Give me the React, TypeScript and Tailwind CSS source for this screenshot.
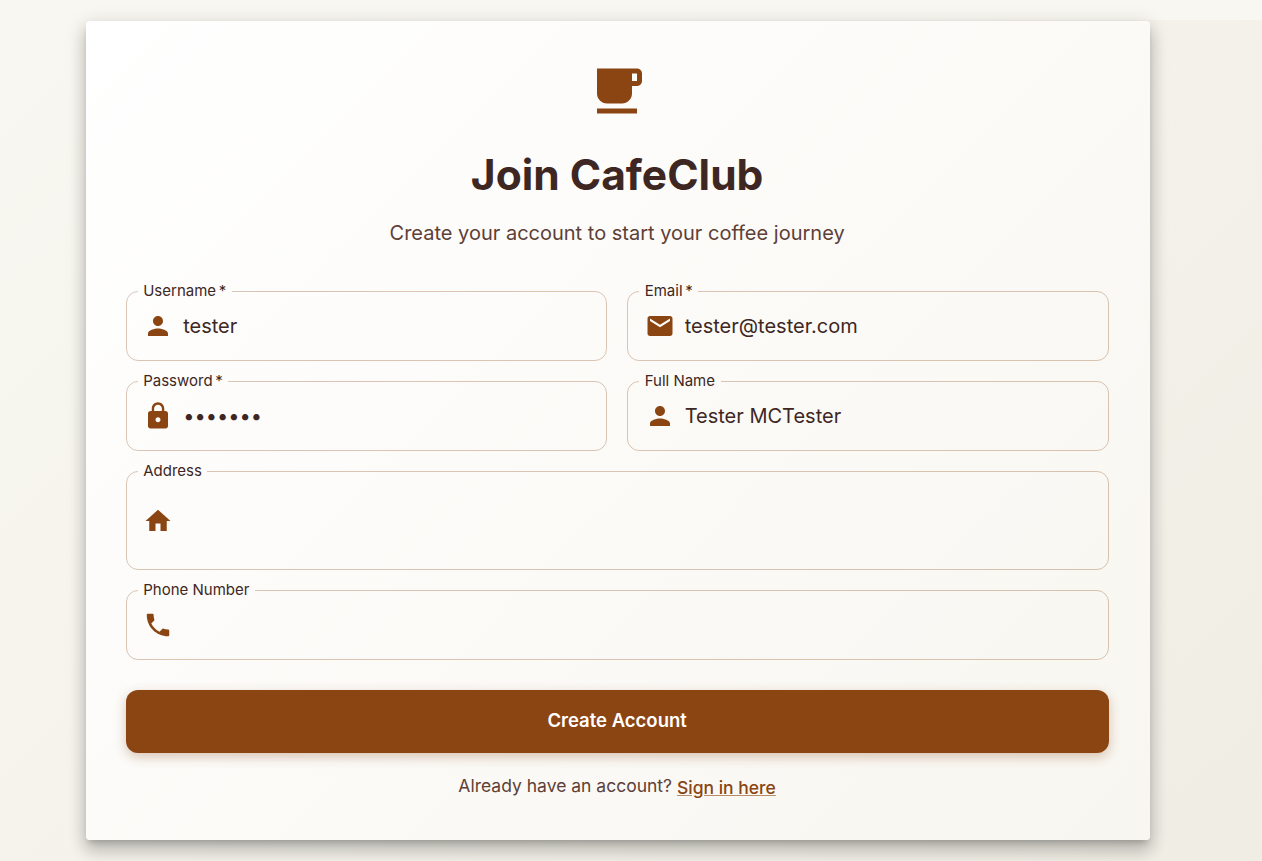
import { ReactNode } from 'react'

const icons = {
  person: 'M12 12c2.21 0 4-1.79 4-4s-1.79-4-4-4-4 1.79-4 4 1.79 4 4 4zm0 2c-2.67 0-8 1.34-8 4v2h16v-2c0-2.66-5.33-4-8-4z',
  email: 'M20 4H4c-1.1 0-1.99.9-1.99 2L2 18c0 1.1.9 2 2 2h16c1.1 0 2-.9 2-2V6c0-1.1-.9-2-2-2zm0 4l-8 5-8-5V6l8 5 8-5v2z',
  lock: 'M18 8h-1V6c0-2.76-2.24-5-5-5S7 3.24 7 6v2H6c-1.1 0-2 .9-2 2v10c0 1.1.9 2 2 2h12c1.1 0 2-.9 2-2V10c0-1.1-.9-2-2-2zm-6 9c-1.1 0-2-.9-2-2s.9-2 2-2 2 .9 2 2-.9 2-2 2zm3.1-9H8.9V6c0-1.71 1.39-3.1 3.1-3.1 1.71 0 3.1 1.39 3.1 3.1v2z',
  home: 'M10 20v-6h4v6h5v-8h3L12 3 2 12h3v8z',
  phone: 'M6.62 10.79c1.44 2.83 3.76 5.14 6.59 6.59l2.2-2.2c.27-.27.67-.36 1.02-.24 1.12.37 2.33.57 3.57.57.55 0 1 .45 1 1V20c0 .55-.45 1-1 1-9.39 0-17-7.61-17-17 0-.55.45-1 1-1h3.5c.55 0 1 .45 1 1 0 1.25.2 2.45.57 3.57.11.35.03.74-.25 1.02l-2.2 2.2z',
  cafe: 'M20 3H4v10c0 2.21 1.79 4 4 4h6c2.21 0 4-1.79 4-4v-3h2c1.11 0 2-.9 2-2V5c0-1.11-.89-2-2-2zm0 5h-2V5h2v3zM4 19h16v2H4z',
}

const Icon = ({ d, className }: { d: string; className: string }) => (
  <svg viewBox="0 0 24 24" className={className} fill="#8b4513" aria-hidden="true">
    <path d={d} />
  </svg>
)

type FieldProps = {
  label: string
  icon: string
  value?: string
  type?: string
  required?: boolean
  wide?: boolean
  tall?: boolean
}

const Field = ({ label, icon, value = '', type = 'text', required, wide, tall }: FieldProps) => {
  const inputClass = 'w-full min-w-0 bg-transparent text-[20px] leading-[28px] text-[#3e2723] outline-none'
  let control: ReactNode = <input className={inputClass} type={type} value={value} readOnly />
  if (tall) control = <textarea className={`${inputClass} resize-none h-[56px]`} value={value} readOnly />

  return (
    <fieldset className={`min-w-0 rounded-xl border border-[#8b4513]/30 ${wide ? 'col-span-2' : ''}`}>
      <legend className="ml-[11px] px-[5.6px] text-[15px] leading-5 text-[#3e2723]">
        {label}
        {required && '\u2009*'}
      </legend>
      <div className={`flex items-center pr-4 pb-[9px] pl-[16.6px] ${tall ? 'h-[88px]' : 'h-[59px]'}`}>
        <Icon d={icon} className="h-[30px] w-[30px] shrink-0" />
        <div className="ml-[10px] flex-1">{control}</div>
      </div>
    </fieldset>
  )
}

export default function App() {
  return (
    <div className="h-screen overflow-hidden bg-[#f8f7f1] pt-5 font-['Inter',sans-serif]">
      <div className="h-full bg-[linear-gradient(135deg,#f8f7f1_0%,#f0ede4_100%)] pt-px pl-[85.6px]">
        <main className="h-[819px] w-[1064px] rounded bg-[linear-gradient(135deg,#ffffff_0%,#f8f6f0_100%)] pt-10 pr-[41px] pl-10 shadow-[0_5px_6px_-3px_rgba(0,0,0,0.2),0_12px_16px_1px_rgba(0,0,0,0.14),0_4px_18px_3px_rgba(0,0,0,0.12)]">
          <div className="flex justify-center">
            <Icon d={icons.cafe} className="h-[60px] w-[60px]" />
          </div>
          <h1 className="mt-[30px] text-center text-[42.5px] leading-[48px] font-bold text-[#3e2723]">Join CafeClub</h1>
          <p className="mt-[19px] text-center text-[20px] leading-[30px] text-[#5d4037]">
            Create your account to start your coffee journey
          </p>

          <form className="mt-[33px]">
            <div className="grid grid-cols-2 gap-x-5 gap-y-[10px]">
              <Field label="Username" icon={icons.person} value="tester" required />
              <Field label="Email" icon={icons.email} value="tester@tester.com" required />
              <Field label="Password" icon={icons.lock} value="1234567" type="password" required />
              <Field label="Full Name" icon={icons.person} value="Tester MCTester" />
              <Field label="Address" icon={icons.home} wide tall />
              <Field label="Phone Number" icon={icons.phone} wide />
            </div>
            <button
              type="button"
              className="mt-[30px] h-[63px] w-full rounded-xl bg-[#8b4513] pb-0.5 text-[18.5px] font-semibold text-white shadow-[0_4px_12px_rgba(139,69,19,0.3)]"
            >
              Create Account
            </button>
          </form>

          <p className="mt-5 text-center text-[17.5px] leading-[26px] text-[#5d4037]">
            Already have an account?{' '}
            <a href="#" className="relative top-0.5 font-medium text-[#8b4513] underline decoration-[#8b4513]/60">
              Sign in here
            </a>
          </p>
        </main>
      </div>
    </div>
  )
}
